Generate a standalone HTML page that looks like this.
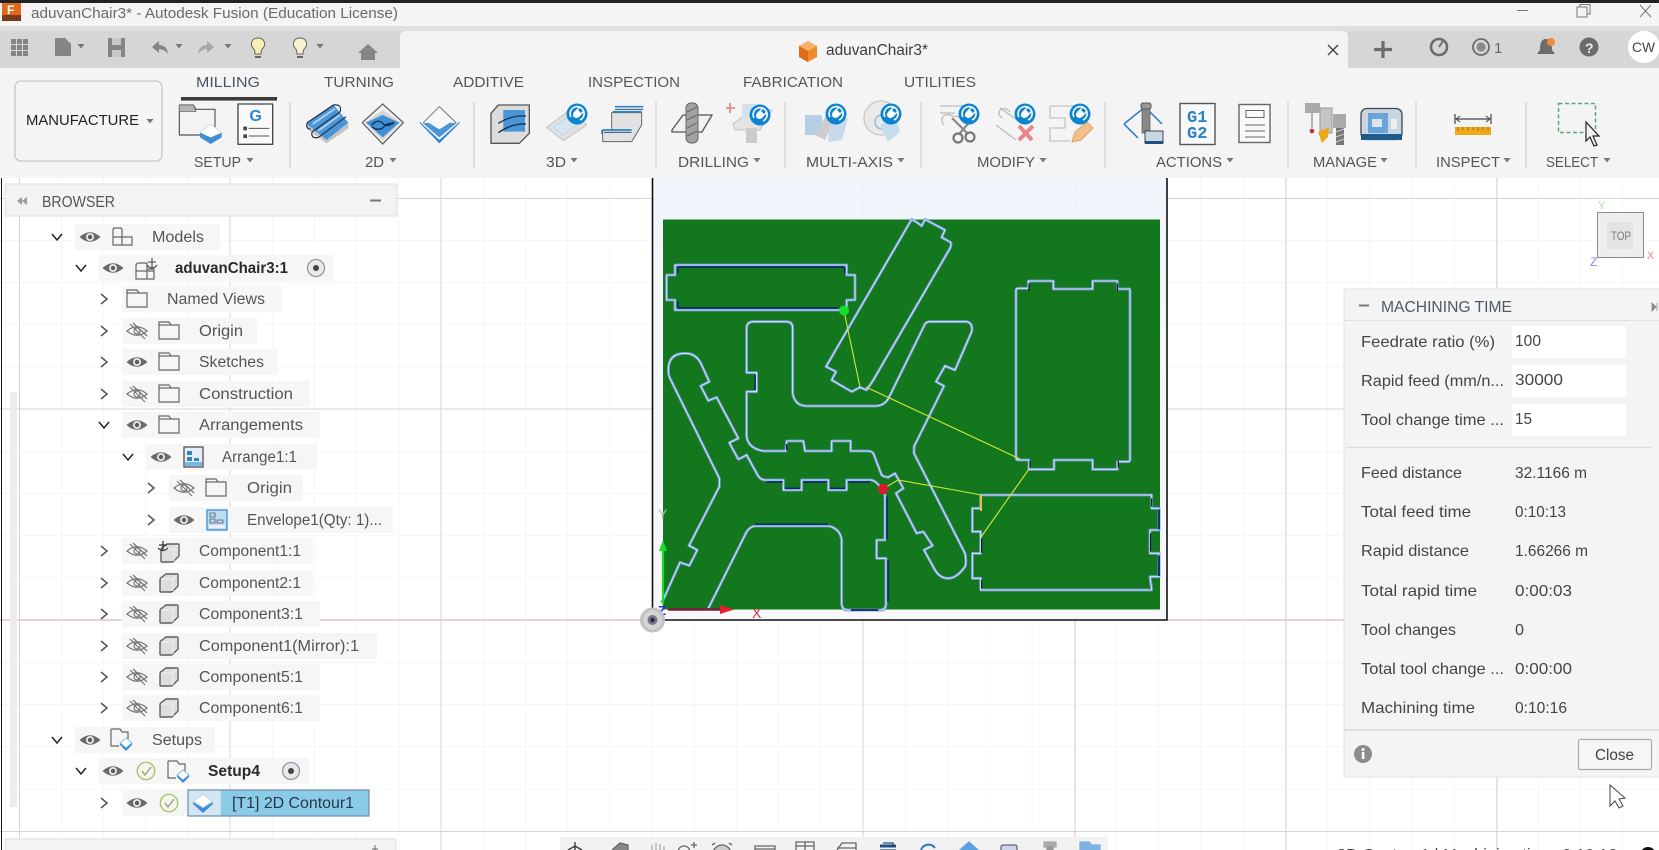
<!DOCTYPE html>
<html lang="en"><head><meta charset="utf-8"><title>aduvanChair3* - Autodesk Fusion</title>
<style>
html,body{margin:0;padding:0;background:#fff;width:1659px;height:850px;overflow:hidden}
svg{display:block;position:absolute;left:0;top:0}
text{font-family:"Liberation Sans",sans-serif}
.t{font-size:15.5px;fill:#555}
.b{font-size:15.5px;fill:#2a2a2a;font-weight:bold}
.r{font-size:15px;fill:#4a4a4a}
.p{font-size:16px;fill:#444}
.ic{fill:none;stroke:#666;stroke-width:1.2}
</style></head><body>
<svg width="1659" height="850" viewBox="0 0 1659 850" xmlns="http://www.w3.org/2000/svg">
<defs>
<pattern id="grid" patternUnits="userSpaceOnUse" x="652" y="620" width="42.2" height="42.2"><path d="M0,0V42.2M0,0H42.2" stroke="#f0eeee" stroke-width="1" fill="none"/></pattern>
<linearGradient id="stock" x1="0" y1="0" x2="0" y2="1"><stop offset="0" stop-color="#edf5fc"/><stop offset="1" stop-color="#f7f6fc"/></linearGradient>
<g id="eye"><path d="M-10.5,0Q0,-9.5 10.5,0Q0,9.5 -10.5,0Z" fill="#6a6a6a"/><circle r="4" fill="#e8e8e8"/><circle r="2.2" fill="#5c5c5c"/></g>
<g id="off" fill="none" stroke="#777" stroke-width="1.2"><path d="M-10,0Q0,-8.5 10,0Q0,8.5 -10,0Z"/><circle r="3"/><path d="M-7,-7L8,8M-4,-8L10,5"/></g>
<path id="cr" d="M-3,-5L3,0L-3,5" fill="none" stroke="#555" stroke-width="1.5"/>
<path id="cd" d="M-5,-3L0,3L5,-3" fill="none" stroke="#222" stroke-width="1.5"/>
<g id="folder" fill="none" stroke="#666" stroke-width="1.2"><path d="M-10,-9H0L2,-6H10V8H-10Z"/><path d="M-10,-6H2"/></g>
<g id="comp"><path d="M-9,-3Q-9,-5 -7,-6L-3,-9H8Q9,-9 9,-8V3L4,8Q3,9 2,9H-8Q-9,9 -9,8Z" fill="#dedede" stroke="#5f5f5f" stroke-width="1.4"/><path d="M-8,-4H4V8M4,-4L8,-8" fill="none" stroke="#f2f2f2" stroke-width="1"/></g>
<g id="setupi"><path d="M-10,-10H-1L1,-7H7V0M-10,-10V7H-2" fill="none" stroke="#666" stroke-width="1.2"/><path d="M5,-1L11,4L5,9L-1,4Z" fill="#fff" stroke="#8db8e0" stroke-width="1"/><path d="M-1,4L5,9L11,4V6L5,12L-1,6Z" fill="#3f8fd6"/></g>
<g id="check"><circle r="8.7" fill="#f5f7ee" stroke="#a9c46c" stroke-width="1.4"/><path d="M-4,0L-1,4L5,-4" fill="none" stroke="#9a9a7c" stroke-width="1.3"/></g>
<g id="radio"><circle r="8.5" fill="#e8e8ef" stroke="#999" stroke-width="1.3"/><circle r="3" fill="#444"/></g>
<g id="plug"><circle r="10.5" fill="#0d84cf"/><path d="M-6,3A7,7 0 1 1 3,6" fill="none" stroke="#fff" stroke-width="1.6"/><path d="M-3,-2L2,-7L3,-6L1,-4L4,-1L6,-3L7,-2L2,3Q-1,5 -3,3Q-5,1 -3,-2Z" fill="#fff"/></g>
<path id="tri" d="M-3.5,-2H3.5L0,2.5Z" fill="#777"/>
</defs>

<!-- viewport -->
<rect width="1659" height="850" fill="#fff"/>
<rect y="178" width="1659" height="672" fill="url(#grid)"/>
<g stroke="#d6d4d4" stroke-width="1" fill="none">
<path d="M19.5,178V850M230,178V850M441,178V850M863,178V850M1075,178V850M1286,178V850M1497,178V850"/>
<path d="M0,198.5H1659M0,409H1659M0,831.5H1659"/>
</g>
<path d="M0,620H652M1167,620H1659" stroke="#d9b8b8" stroke-width="1.3"/>
<rect x="652" y="178" width="515" height="442" fill="url(#stock)" fill-opacity=".85"/>
<path d="M652.5,178V620H1167V178" fill="none" stroke="#111" stroke-width="1.6"/>
<rect x="663" y="219.5" width="497" height="390" fill="#13781d"/>

<!-- toolpaths -->
<g transform="translate(640,180) scale(.33333)" fill="none" stroke-linejoin="round">
<g stroke="#6f9ad2" stroke-width="8.5">
<path id="pa" d="M105,255H620V285H645V360H620V390H105V360H80V285H105Z"/>
<path id="pb" d="M815,118L835,130L845,138L855,118L915,150L905,172L932,187Q935,195 930,205L700,600Q690,615 680,630L660,622L635,635L575,600L588,575L558,560Z"/>
<path id="pc" d="M340,425H440Q458,425 458,445V640Q465,678 500,678H705Q735,678 748,650L855,432Q860,425 870,425H980Q1000,430 995,455L945,570L915,558L888,605L912,618L822,800V820L975,1120Q980,1150 975,1160Q950,1195 925,1195Q900,1195 885,1170L852,1110L878,1097L850,1055L830,1060L768,940L790,925L765,880L745,892Q730,890 725,885L700,820Q695,813 680,813H632V783H575V813H495L490,783H440L437,813H370Q325,805 320,770V635H350V578H320V445Q320,425 340,425Z"/>
<path id="pd" d="M85,570Q85,520 135,520Q170,520 185,555L208,605L182,618L205,662L230,652L295,775L268,788L295,838L320,825L350,880Q360,900 375,900H430V930H485V900H565V930H620V900H695Q715,905 735,945V1080H710V1135H738V1270Q738,1290 720,1290H625Q605,1290 605,1270V1080Q600,1045 565,1038H345Q330,1040 320,1055L205,1285M65,1270L120,1147L148,1157L172,1110L147,1097L238,920V895L90,595Q85,585 85,570"/>
</g>
<g stroke="#e8f0ff" stroke-width="2.4">
<use href="#pa"/><use href="#pb"/><use href="#pc"/><use href="#pd"/>
</g>
<g stroke="#0b2a66" stroke-width="5">
<path d="M114,261H612M114,384H596M614,262V280M114,262V280M114,365V383"/>
<path d="M741,950V1078M744,1140V1265M345,1033H565M633,1290H715M440,792V810M345,630V585"/>
<path d="M380,906H428M435,925H480M490,906H560M570,925H615M625,906H690"/>
</g>
</g>
<g transform="translate(960,200) scale(.33333)" fill="none" stroke-linejoin="round">
<g stroke="#6f9ad2" stroke-width="8.5">
<path id="pe" d="M175,265H205V243H280V267H398V243H472V267H505Q510,265 510,272V778Q510,785 505,785H472V808H398V780H282V808H207V780H175Q168,780 168,772V272Q168,265 175,265Z"/>
<path id="pf" d="M62,885H575V925H597V990H570V1060H597V1130H570L575,1170H62V1135H37V1060H62V995H37V925H62Z"/>
</g>
<g stroke="#e8f0ff" stroke-width="2.4"><use href="#pe"/><use href="#pf"/></g>
<g stroke="#061c66" stroke-width="5"><path d="M597,928V988M597,1066V1128"/></g>
<g stroke="#0b1f2f" stroke-width="4"><path d="M207,250V272M472,250V272M210,782V803M475,782V803M65,1015V1058M65,1140V1165M575,895V920M572,1000V1055"/></g>
</g>
<g fill="none" stroke-width="1.1">
<path d="M844,311L860,387M866,387L1020,459M1029,469L981,537M883,489L898,480L960,491L981,495" stroke="#cfe83a"/>
<path d="M981,495V511" stroke="#e8c030" stroke-width="2"/>
</g>
<circle cx="844" cy="310.5" r="5" fill="#16dc2a"/>
<circle cx="883" cy="489" r="5.2" fill="#d91c2c"/>

<!-- triad -->
<path d="M663,604V548" stroke="#12e020" stroke-width="2.2"/><path d="M659,551H667L663,540Z" fill="#12e020"/>
<text x="658" y="519" font-size="14" fill="#9ac79a">Y</text>
<path d="M668,609.5H722" stroke="#7a2036" stroke-width="2.4"/><path d="M720,605L734,609.5L720,614Z" fill="#e0202a"/>
<text x="752" y="618" font-size="14" fill="#d2353a">X</text>
<text x="658" y="615" font-size="13" font-weight="bold" fill="#1c2cdc">Z</text>
<circle cx="652.5" cy="620" r="11" fill="#d4d4d4" stroke="#c2c2c2" stroke-width="3"/>
<circle cx="652.5" cy="620" r="5" fill="#7a7292"/><circle cx="652.5" cy="620" r="2.2" fill="#2a2a3a"/>

<!-- viewcube -->
<rect x="1597.5" y="212.5" width="46" height="45" fill="#eeeeee" stroke="#8a8a8a" stroke-width="1"/>
<rect x="1607" y="222" width="26" height="27" fill="#e3e3e3"/>
<text x="1611" y="240" font-size="12" fill="#7c7c7c" textLength="20" lengthAdjust="spacingAndGlyphs">TOP</text>
<text x="1598" y="209" font-size="11" fill="#a6dca6">Y</text>
<text x="1647" y="259" font-size="11" fill="#ea8a8a">X</text>
<text x="1590" y="266" font-size="12" fill="#8a86e6">Z</text>

<!-- top chrome -->
<rect width="1659" height="178" fill="#f4f4f4"/>
<rect width="1659" height="3" fill="#222"/>
<rect y="26" width="1659" height="5" fill="#dfdfdf"/>
<rect y="31" width="1659" height="37" fill="#d6d6d6"/>
<path d="M400,68V37Q400,31 406,31H1342Q1348,31 1348,37V68Z" fill="#f4f4f4"/>
<rect x="2" y="3" width="19" height="18" fill="#e2691c"/><rect x="2" y="15" width="19" height="6" fill="#7a3a1a"/>
<text x="7" y="14" font-size="12" font-weight="bold" fill="#fff">F</text>
<text x="31" y="18" font-size="15" fill="#6a6a6a" textLength="367" lengthAdjust="spacingAndGlyphs">aduvanChair3* - Autodesk Fusion (Education License)</text>
<!-- window controls -->
<path d="M1517,10.5H1528" stroke="#777"/><g fill="none" stroke="#777"><rect x="1577" y="7" width="10" height="10"/><path d="M1580,7V4.5H1590V14H1587"/></g><path d="M1640,5L1651,17M1651,5L1640,17" stroke="#777" fill="none"/>

<!-- quick toolbar -->
<g fill="#858585">
<path d="M11,39h5v5h-5zM17,39h5v5h-5zM23,39h5v5h-5zM11,45h5v5h-5zM17,45h5v5h-5zM23,45h5v5h-5zM11,51h5v5h-5zM17,51h5v5h-5zM23,51h5v5h-5z"/>
<path d="M55,38H65L71,44V56H55Z"/><use href="#tri" x="81" y="46"/>
<path d="M108,38H125V57H108Z"/><rect x="112" y="38" width="9" height="7" fill="#c8c8c8"/><rect x="112" y="50" width="9" height="7" fill="#c8c8c8"/>
<path d="M152,47L159,41V45Q167,45 168,54Q164,49 159,49V53Z"/><use href="#tri" x="179" y="46"/>
<path d="M214,47L207,41V45Q199,45 198,54Q202,49 207,49V53Z" fill="#a8a8a8"/><use href="#tri" x="228" y="46"/>
<use href="#tri" x="320" y="46"/>
<path d="M368,44L378,53H375V60H361V53H358Z"/>
</g>
<g stroke="#666" stroke-width="1"><path d="M258,38C251,38 250,45 253,48C255,50 255,52 255,54H261C261,52 261,50 263,48C266,45 265,38 258,38Z" fill="#f6eeb4"/><path d="M255,57H261" stroke-width="2"/>
<path d="M300,38C293,38 292,45 295,48C297,50 297,52 297,54H303C303,52 303,50 305,48C308,45 307,38 300,38Z" fill="#f7f2cf"/><path d="M297,57H303" stroke-width="2"/></g>

<!-- document tab -->
<path d="M808,41L817,46V57L808,62L799,57V46Z" fill="#ef8a2c"/><path d="M808,41L817,46L808,51L799,46Z" fill="#f7b26a"/><path d="M808,51V62L799,57V46Z" fill="#dd6d18"/>
<text x="826" y="55" font-size="15.5" fill="#3c3c3c" textLength="102" lengthAdjust="spacingAndGlyphs">aduvanChair3*</text>
<path d="M1328,45L1338,55M1338,45L1328,55" stroke="#444" stroke-width="1.4"/>
<path d="M1383,41V58M1374,49.5H1392" stroke="#6c6c6c" stroke-width="3.2"/>
<circle cx="1439" cy="47" r="8" fill="none" stroke="#6c6c6c" stroke-width="2.6"/><path d="M1439,47L1443,41" stroke="#6c6c6c" stroke-width="2"/>
<circle cx="1481" cy="47" r="8" fill="none" stroke="#6c6c6c" stroke-width="1.8"/><circle cx="1481" cy="47" r="4.6" fill="#8a8a8a"/>
<text x="1494" y="53" font-size="15" fill="#666">1</text>
<path d="M1546,39C1541,39 1540,44 1540,50L1537,54H1555L1552,50C1552,44 1551,39 1546,39Z" fill="#6c6c6c"/><circle cx="1551" cy="42" r="4" fill="#f08a3c"/>
<circle cx="1589" cy="47" r="9.5" fill="#6c6c6c"/><text x="1585" y="53" font-size="14" font-weight="bold" fill="#eee">?</text>
<circle cx="1644" cy="47" r="16" fill="#fff"/><text x="1632" y="52" font-size="14" fill="#444" textLength="23" lengthAdjust="spacingAndGlyphs">CW</text>

<!-- ribbon tabs -->
<g font-size="15" fill="#565656">
<text x="196" y="87" fill="#4a5560" textLength="64" lengthAdjust="spacingAndGlyphs">MILLING</text>
<text x="324" y="87" textLength="70" lengthAdjust="spacingAndGlyphs">TURNING</text>
<text x="453" y="87" textLength="71" lengthAdjust="spacingAndGlyphs">ADDITIVE</text>
<text x="588" y="87" textLength="92" lengthAdjust="spacingAndGlyphs">INSPECTION</text>
<text x="743" y="87" textLength="100" lengthAdjust="spacingAndGlyphs">FABRICATION</text>
<text x="904" y="87" textLength="72" lengthAdjust="spacingAndGlyphs">UTILITIES</text>
</g>
<rect x="181" y="97" width="96" height="3.6" fill="#3a3a3a"/>
<rect x="15" y="81" width="147" height="80" rx="6" fill="#f5f5f5" stroke="#c6c6c6" stroke-width="1.3"/>
<text x="26" y="125" font-size="15" fill="#222" textLength="113" lengthAdjust="spacingAndGlyphs">MANUFACTURE</text>
<use href="#tri" x="150" y="121"/>
<g stroke="#cfcfcf" stroke-width="1.2"><path d="M290,102V168M474,102V168M656,102V168M785,102V168M921,102V168M1105,102V168M1288,102V168M1416,102V168M1526,102V168"/></g>
<g font-size="15" fill="#555">
<text x="194" y="167" textLength="47" lengthAdjust="spacingAndGlyphs">SETUP</text>
<text x="365" y="167" textLength="19" lengthAdjust="spacingAndGlyphs">2D</text>
<text x="546" y="167" textLength="20" lengthAdjust="spacingAndGlyphs">3D</text>
<text x="678" y="167" textLength="71" lengthAdjust="spacingAndGlyphs">DRILLING</text>
<text x="806" y="167" textLength="87" lengthAdjust="spacingAndGlyphs">MULTI-AXIS</text>
<text x="977" y="167" textLength="58" lengthAdjust="spacingAndGlyphs">MODIFY</text>
<text x="1156" y="167" textLength="66" lengthAdjust="spacingAndGlyphs">ACTIONS</text>
<text x="1313" y="167" textLength="64" lengthAdjust="spacingAndGlyphs">MANAGE</text>
<text x="1436" y="167" textLength="64" lengthAdjust="spacingAndGlyphs">INSPECT</text>
<text x="1546" y="167" textLength="52" lengthAdjust="spacingAndGlyphs">SELECT</text>
</g>
<use href="#tri" x="250" y="160"/><use href="#tri" x="393" y="160"/><use href="#tri" x="574" y="160"/><use href="#tri" x="757" y="160"/><use href="#tri" x="901" y="160"/><use href="#tri" x="1043" y="160"/><use href="#tri" x="1230" y="160"/><use href="#tri" x="1384" y="160"/><use href="#tri" x="1507" y="160"/><use href="#tri" x="1607" y="160"/>

<!-- ribbon icons left -->
<g transform="translate(170,100) scale(.33333)" stroke-linejoin="round">
<path d="M28,15H70L78,28H135V85M28,15V105H90" fill="none" stroke="#555" stroke-width="3.5"/><path d="M28,15H70L78,35H28Z" fill="#b5b5b5" stroke="#666" stroke-width="2"/>
<path d="M122,72L155,98L122,124L90,98Z" fill="#fff" stroke="#b8d2ea" stroke-width="2"/><path d="M90,98L122,112L155,98V112L122,132L90,112Z" fill="#3f8ed8"/>
<rect x="204" y="12" width="104" height="121" fill="#f9f9f9" stroke="#444" stroke-width="4"/>
<text x="238" y="63" font-size="48" font-weight="bold" fill="#2a86cc">G</text>
<path d="M220,80h11v11h-11zM220,103h11v11h-11z" fill="#444"/><path d="M236,85H298M236,108H298" stroke="#555" stroke-width="3"/>
<path d="M470,120L535,68V85L470,130L410,85V72Z" fill="#c4c4c4"/>
<path d="M410,72L490,14L535,68L470,120Z" fill="#4a95d8"/>
<path d="M428,72L495,26M445,92L510,45" stroke="#a5cdf0" stroke-width="6" fill="none"/>
<path d="M422,88Q405,85 412,68L490,15Q518,12 510,36L426,96Q422,118 446,112L528,50" fill="none" stroke="#1f2f40" stroke-width="3.5"/>
<path d="M638,12L700,68L638,132L577,68Z" fill="#f1f1f1" stroke="#666" stroke-width="4"/><path d="M585,68L638,30L692,68L638,122Z" fill="#d5d5d5"/><path d="M588,68L638,45L688,68L638,112Z" fill="#3f8ed8"/><path d="M605,75Q625,55 638,70Q655,85 672,65M605,80Q625,95 640,82Q655,65 672,72" fill="none" stroke="#17304a" stroke-width="4"/>
<path d="M750,68L808,122L868,68L808,128Z" fill="#2f86d6" stroke="#2f86d6" stroke-width="3"/><path d="M808,20L858,68L808,110L760,68Z" fill="#f8f8f8" stroke="#777" stroke-width="3"/><path d="M775,68L808,88L840,68L858,70L808,112L760,70Z" fill="#4a95d8"/>
<path d="M985,15H1078V100L1048,130H963V40Z" fill="#dcdcdc" stroke="#555" stroke-width="4"/><path d="M1000,30H1065V95H1000Z" fill="#4a95d8"/><path d="M985,70Q1025,45 1068,48M985,98Q1025,70 1068,72" fill="none" stroke="#18304a" stroke-width="4"/>
<g opacity=".65"><path d="M1130,82L1200,30L1250,75L1180,122Z" fill="#d8d8d8" stroke="#aaa" stroke-width="3"/><path d="M1150,80L1200,48L1225,72L1178,105Z" fill="#c9def0" stroke="#8fb8d8" stroke-width="2"/></g>
<path d="M1325,38H1415V75L1385,125H1298V90H1325Z" fill="#e2e2e2" stroke="#666" stroke-width="3"/><path d="M1335,20H1420M1328,35H1415M1298,90H1385M1296,102V90" stroke="#2a86cc" stroke-width="5" fill="none"/><path d="M1335,28H1420M1302,97H1385" stroke="#1a3a5a" stroke-width="2.5"/>
</g>
<use href="#plug" x="577" y="114"/>
<!-- drilling -->
<path d="M672,130L683,115H712L702,132H672Z" fill="#f1f1f1" stroke="#555" stroke-width="1.3"/>
<rect x="686" y="103" width="12" height="40" rx="5" fill="#a2a2a2" stroke="#666"/>
<path d="M687,112L697,107M687,120L697,115M687,128L697,123M687,136L697,131" stroke="#666"/>
<g opacity=".55"><path d="M733,124L752,110H772L760,130H735Z" fill="#d8d8d8" stroke="#999"/><rect x="746" y="128" width="11" height="15" fill="#aaa"/><rect x="742" y="104" width="18" height="14" fill="#bcd3e8"/></g>
<path d="M730,103V113M726,108H735" stroke="#e88a90" stroke-width="1.8"/>
<use href="#plug" x="760" y="115"/>
<!-- multi axis -->
<g opacity=".7"><path d="M805,115H822V135H805Z" fill="#9cc0e2"/><path d="M815,135L830,108L838,115L825,140Z" fill="#bdbdbd"/><path d="M830,125L848,118L842,140L828,142Z" fill="#b5cfe6"/></g>
<use href="#plug" x="836" y="114"/>
<g opacity=".7" fill="none"><circle cx="881" cy="118" r="17" stroke="#bbb" stroke-width="1.5" fill="#e7e7e7"/><circle cx="882" cy="122" r="7" stroke="#8ab1d4" stroke-width="2"/><path d="M880,125L896,118L900,132L888,142Z" fill="#b5d2ea"/></g>
<use href="#plug" x="891" y="114"/>
<!-- modify -->
<g fill="none">
<path d="M940,106H965M940,113H955" stroke="#bbb" stroke-width="1.2"/><path d="M944,125C938,117 946,112 952,116L968,118" stroke="#bbb" stroke-width="1.3"/>
<path d="M952,118L967,133M973,118L960,133" stroke="#8a8a8a" stroke-width="2.2"/><circle cx="958" cy="138" r="4.5" stroke="#777" stroke-width="2.2"/><circle cx="970" cy="137" r="4.5" stroke="#777" stroke-width="2.2"/>
<path d="M1000,108L1020,122M996,125L1016,140M1002,118C994,112 1004,104 1010,112" stroke="#bbb" stroke-width="1.3"/>
<path d="M1019,126L1032,140M1033,126L1019,140" stroke="#e8858c" stroke-width="4"/>
<path d="M1050,106H1080M1050,106V118H1065V128H1050V141H1070M1080,106V114" stroke="#c4c4c4" stroke-width="1.3"/>
</g>
<path d="M1072,142L1075,132L1087,122L1093,128L1081,140Z" fill="#f2c08a" stroke="#e0a060"/>
<use href="#plug" x="969" y="114"/><use href="#plug" x="1025" y="114"/><use href="#plug" x="1080" y="114"/>
<!-- actions -->
<path d="M1124,124L1145,107L1162,124M1124,124L1138,138" fill="none" stroke="#2a78c0" stroke-width="1.5"/>
<rect x="1141" y="103" width="10" height="6" rx="2" fill="#999" stroke="#555"/><rect x="1142" y="109" width="8" height="24" fill="#888" stroke="#555" stroke-width=".7"/>
<rect x="1145" y="131" width="18" height="12" fill="#c9d8e6" stroke="#445"/><rect x="1145" y="141" width="18" height="3" fill="#1f4f80"/>
<rect x="1180" y="103.5" width="35" height="41" fill="#f9f9f9" stroke="#555" stroke-width="1.4"/>
<text x="1187" y="122" font-size="17" font-weight="bold" fill="#2a80c4" style="font-family:'Liberation Mono',monospace">G1</text>
<text x="1187" y="138" font-size="17" font-weight="bold" fill="#2a80c4" style="font-family:'Liberation Mono',monospace">G2</text>
<rect x="1239" y="104.5" width="31" height="38" fill="#f9f9f9" stroke="#666" stroke-width="1.4"/><rect x="1246" y="110.5" width="18" height="7" fill="none" stroke="#666"/><path d="M1245,125H1265M1245,131H1265M1245,137H1265" stroke="#666" stroke-width="1.1"/>
<!-- manage -->
<rect x="1305" y="103" width="15" height="10" fill="#aaa"/><path d="M1312,113V128" stroke="#888" stroke-width="1.2"/><circle cx="1312" cy="131" r="2.3" fill="#d4282a"/>
<rect x="1320" y="108" width="12" height="25" fill="#c5c5c5" stroke="#999"/><path d="M1318,132L1329,127L1328,137L1322,143Z" fill="#eda91e"/>
<rect x="1333" y="114" width="13" height="14" fill="#aaa"/><rect x="1336" y="128" width="8" height="17" fill="#777"/><path d="M1336,132L1344,129M1336,137L1344,134M1336,142L1344,139" stroke="#ccc"/>
<rect x="1361" y="108.5" width="41" height="31" rx="6" fill="#c8d6e4" stroke="#444" stroke-width="1.3"/><rect x="1368" y="113" width="20" height="20" fill="#6aa5da"/><rect x="1372" y="119" width="10" height="8" fill="#d8e6f2"/><rect x="1391" y="119" width="6" height="10" fill="#eee"/><rect x="1361" y="134" width="41" height="6" fill="#1f5a8a"/>
<!-- inspect -->
<path d="M1455,114V124M1491,114V124M1457,119H1489" stroke="#444" stroke-width="1.2"/><path d="M1460,116L1456,119L1460,122M1486,116L1490,119L1486,122" fill="none" stroke="#444"/>
<rect x="1455" y="127" width="36" height="8" fill="#f0a818"/><path d="M1458,127v4M1463,127v3M1468,127v4M1473,127v3M1478,127v4M1483,127v3M1488,127v4" stroke="#8a6a10" stroke-width=".8"/>
<!-- select -->
<rect x="1558.5" y="103.5" width="37" height="29" fill="none" stroke="#5aa87a" stroke-width="1.5" stroke-dasharray="4 2.5"/>
<path d="M1586,122V141L1590,137L1594,146L1597,145L1593,136L1599,136Z" fill="#f4f4f4" stroke="#222" stroke-width="1.2"/>

<!-- browser panel -->
<rect x="1" y="178" width="1" height="672" fill="#111"/>
<rect x="10" y="392" width="7" height="415" fill="#ececec"/>
<rect x="5" y="184" width="392" height="32" fill="#f3f3f3" stroke="#dcdcdc"/>
<path d="M22,197L17,201L22,205ZM27,197L22,201L27,205Z" fill="#999"/>
<text x="42" y="207" font-size="15.5" fill="#555" textLength="73" lengthAdjust="spacingAndGlyphs">BROWSER</text>
<path d="M370,200.5H381" stroke="#777" stroke-width="2"/>

<g fill="#f6f6f6">
<rect x="75" y="224" width="145" height="26"/><rect x="98" y="255" width="236" height="26"/><rect x="122" y="286" width="160" height="26"/><rect x="122" y="318" width="135" height="26"/><rect x="122" y="349" width="156" height="26"/><rect x="122" y="381" width="188" height="26"/><rect x="122" y="412" width="198" height="26"/><rect x="146" y="444" width="171" height="26"/><rect x="169" y="475" width="134" height="26"/><rect x="169" y="507" width="224" height="26"/><rect x="122" y="538" width="191" height="26"/><rect x="122" y="570" width="191" height="26"/><rect x="122" y="601" width="198" height="26"/><rect x="122" y="633" width="255" height="26"/><rect x="122" y="664" width="198" height="26"/><rect x="122" y="695" width="198" height="26"/><rect x="75" y="727" width="140" height="26"/><rect x="98" y="758" width="211" height="26"/><rect x="122" y="790" width="66" height="26"/>
</g>

<!-- tree chevrons -->
<use href="#cd" x="57" y="237"/><use href="#cd" x="81" y="268"/><use href="#cr" x="104" y="299"/><use href="#cr" x="104" y="331"/><use href="#cr" x="104" y="362"/><use href="#cr" x="104" y="394"/><use href="#cd" x="104" y="425"/><use href="#cd" x="128" y="457"/><use href="#cr" x="151" y="488"/><use href="#cr" x="151" y="520"/><use href="#cr" x="104" y="551"/><use href="#cr" x="104" y="583"/><use href="#cr" x="104" y="614"/><use href="#cr" x="104" y="646"/><use href="#cr" x="104" y="677"/><use href="#cr" x="104" y="708"/><use href="#cd" x="57" y="740"/><use href="#cd" x="81" y="771"/><use href="#cr" x="104" y="803"/>
<!-- tree eyes -->
<use href="#eye" x="90" y="237"/><use href="#eye" x="113" y="268"/><use href="#off" x="137" y="331"/><use href="#eye" x="137" y="362"/><use href="#off" x="137" y="394"/><use href="#eye" x="137" y="425"/><use href="#eye" x="161" y="457"/><use href="#off" x="184" y="488"/><use href="#eye" x="184" y="520"/><use href="#off" x="137" y="551"/><use href="#off" x="137" y="583"/><use href="#off" x="137" y="614"/><use href="#off" x="137" y="646"/><use href="#off" x="137" y="677"/><use href="#off" x="137" y="708"/><use href="#eye" x="90" y="740"/><use href="#eye" x="113" y="771"/><use href="#eye" x="137" y="803"/>
<!-- tree icons -->
<g class="ic"><path d="M113,245V230Q113,228 115,228H120Q122,228 122,230V245ZM122,237H132V245H113M113,237H122"/></g>
<g class="ic"><path d="M136,266Q136,263 139,263H147V279H136ZM147,269H154V279H147M136,271H154"/></g>
<path d="M152,258V269M148,262H156M147,265Q152,271 157,265" fill="none" stroke="#444" stroke-width="1.1"/>
<use href="#folder" x="137" y="299"/><use href="#folder" x="169" y="331"/><use href="#folder" x="169" y="362"/><use href="#folder" x="169" y="394"/><use href="#folder" x="169" y="425"/><use href="#folder" x="216" y="488"/>
<rect x="184" y="447" width="19" height="20" fill="#e6eef6" stroke="#444" stroke-width="1.2"/><path d="M187,451h5v4h-5zM187,457h5v4h-5zM194,458h5v3h-5z" fill="#2a86c6"/><rect x="185" y="462" width="17" height="4" fill="#7ab6e2"/>
<rect x="207" y="510" width="20" height="20" fill="#bcdcf6" stroke="#2a8ad0" stroke-width="1.2"/><path d="M210,513h5v4h-5zM210,519h5v4h-5zM217,520h6v3h-6z" fill="none" stroke="#555" stroke-width=".8"/><rect x="209" y="525" width="16" height="3" fill="#eef"/>
<use href="#comp" x="170" y="553"/><path d="M163,541V551M159,545H167M158,548Q163,553 168,548" fill="none" stroke="#333" stroke-width="1.2"/>
<use href="#comp" x="169" y="583"/><use href="#comp" x="169" y="614"/><use href="#comp" x="169" y="646"/><use href="#comp" x="169" y="677"/><use href="#comp" x="169" y="708"/>
<use href="#setupi" x="121" y="739"/><use href="#setupi" x="178" y="771"/>
<use href="#radio" x="316" y="268"/><use href="#radio" x="291" y="771"/>
<use href="#check" x="146" y="771"/><use href="#check" x="169" y="803"/>

<!-- selection -->
<rect x="188" y="790" width="181" height="26" fill="#8ccbe8" stroke="#6e8ea8" stroke-width="1.2"/>
<rect x="188.7" y="790.7" width="32" height="24.6" fill="#d3e6f3"/>
<path d="M203,794L212,801L203,808L194,801Z" fill="#fff" stroke="#bcd6ec" stroke-width="1"/><path d="M193,802L203,808L213,802V804L203,813L193,804Z" fill="#3f8ed8"/>

<!-- tree text -->
<text class="t" x="152" y="242" textLength="52" lengthAdjust="spacingAndGlyphs">Models</text>
<text class="b" x="175" y="273" textLength="113" lengthAdjust="spacingAndGlyphs">aduvanChair3:1</text>
<text class="t" x="167" y="304" textLength="98" lengthAdjust="spacingAndGlyphs">Named Views</text>
<text class="t" x="199" y="336" textLength="44" lengthAdjust="spacingAndGlyphs">Origin</text>
<text class="t" x="199" y="367" textLength="65" lengthAdjust="spacingAndGlyphs">Sketches</text>
<text class="t" x="199" y="399" textLength="94" lengthAdjust="spacingAndGlyphs">Construction</text>
<text class="t" x="199" y="430" textLength="104" lengthAdjust="spacingAndGlyphs">Arrangements</text>
<text class="t" x="222" y="462" textLength="75" lengthAdjust="spacingAndGlyphs">Arrange1:1</text>
<text class="t" x="247" y="493" textLength="45" lengthAdjust="spacingAndGlyphs">Origin</text>
<text class="t" x="247" y="525" textLength="135" lengthAdjust="spacingAndGlyphs">Envelope1(Qty: 1)...</text>
<text class="t" x="199" y="556" textLength="102" lengthAdjust="spacingAndGlyphs">Component1:1</text>
<text class="t" x="199" y="588" textLength="102" lengthAdjust="spacingAndGlyphs">Component2:1</text>
<text class="t" x="199" y="619" textLength="104" lengthAdjust="spacingAndGlyphs">Component3:1</text>
<text class="t" x="199" y="651" textLength="160" lengthAdjust="spacingAndGlyphs">Component1(Mirror):1</text>
<text class="t" x="199" y="682" textLength="104" lengthAdjust="spacingAndGlyphs">Component5:1</text>
<text class="t" x="199" y="713" textLength="104" lengthAdjust="spacingAndGlyphs">Component6:1</text>
<text class="t" x="152" y="745" textLength="50" lengthAdjust="spacingAndGlyphs">Setups</text>
<text class="b" x="208" y="776" textLength="52" lengthAdjust="spacingAndGlyphs">Setup4</text>
<text class="t" x="232" y="808" style="fill:#23384a" textLength="122" lengthAdjust="spacingAndGlyphs">[T1] 2D Contour1</text>

<!-- machining time panel -->
<rect x="1344" y="289" width="315" height="488" fill="#f4f4f5"/>
<path d="M1344,289H1659M1344,289V777H1659" fill="none" stroke="#e2e2e2"/>
<path d="M1344,320.5H1659" stroke="#e0e0e0"/>
<path d="M1359,305.5H1369" stroke="#777" stroke-width="2"/>
<text x="1381" y="312" font-size="15.5" fill="#4f5a62" textLength="131" lengthAdjust="spacingAndGlyphs">MACHINING TIME</text>
<path d="M1652,303L1656,307L1652,311ZM1657,303V311" fill="#888" stroke="#888" stroke-width=".8"/>
<g fill="#fff"><rect x="1512" y="326" width="114" height="32"/><rect x="1512" y="365" width="114" height="32"/><rect x="1512" y="404" width="114" height="32"/></g>
<g>
<text class="p" x="1361" y="347" textLength="134" lengthAdjust="spacingAndGlyphs">Feedrate ratio (%)</text>
<text class="p" x="1361" y="386" textLength="143" lengthAdjust="spacingAndGlyphs">Rapid feed (mm/n...</text>
<text class="p" x="1361" y="425" textLength="143" lengthAdjust="spacingAndGlyphs">Tool change time ...</text>
<text class="p" x="1515" y="346" textLength="26" lengthAdjust="spacingAndGlyphs">100</text>
<text class="p" x="1515" y="385" textLength="48" lengthAdjust="spacingAndGlyphs">30000</text>
<text class="p" x="1515" y="424" textLength="17" lengthAdjust="spacingAndGlyphs">15</text>
<text class="p" x="1361" y="478" textLength="101" lengthAdjust="spacingAndGlyphs">Feed distance</text>
<text class="p" x="1361" y="517" textLength="110" lengthAdjust="spacingAndGlyphs">Total feed time</text>
<text class="p" x="1361" y="556" textLength="108" lengthAdjust="spacingAndGlyphs">Rapid distance</text>
<text class="p" x="1361" y="596" textLength="116" lengthAdjust="spacingAndGlyphs">Total rapid time</text>
<text class="p" x="1361" y="635" textLength="95" lengthAdjust="spacingAndGlyphs">Tool changes</text>
<text class="p" x="1361" y="674" textLength="143" lengthAdjust="spacingAndGlyphs">Total tool change ...</text>
<text class="p" x="1361" y="713" textLength="114" lengthAdjust="spacingAndGlyphs">Machining time</text>
<text class="p" x="1515" y="478" textLength="72" lengthAdjust="spacingAndGlyphs">32.1166 m</text>
<text class="p" x="1515" y="517" textLength="51" lengthAdjust="spacingAndGlyphs">0:10:13</text>
<text class="p" x="1515" y="556" textLength="73" lengthAdjust="spacingAndGlyphs">1.66266 m</text>
<text class="p" x="1515" y="596" textLength="57" lengthAdjust="spacingAndGlyphs">0:00:03</text>
<text class="p" x="1515" y="635" textLength="9" lengthAdjust="spacingAndGlyphs">0</text>
<text class="p" x="1515" y="674" textLength="57" lengthAdjust="spacingAndGlyphs">0:00:00</text>
<text class="p" x="1515" y="713" textLength="52" lengthAdjust="spacingAndGlyphs">0:10:16</text>
</g>
<path d="M1346,447.5H1652" stroke="#dcdcdc" stroke-width="1.2"/>
<path d="M1344,730H1659" stroke="#dedede" stroke-width="2"/>
<circle cx="1363" cy="754" r="9" fill="#8c8c8c"/><rect x="1361.8" y="752" width="2.6" height="7" fill="#fff"/><circle cx="1363" cy="749.5" r="1.5" fill="#fff"/>
<rect x="1578.5" y="739.5" width="73" height="30" rx="2" fill="#f6f6f6" stroke="#aaa" stroke-width="1.2"/>
<text x="1595" y="760" font-size="15.5" fill="#444" textLength="39" lengthAdjust="spacingAndGlyphs">Close</text>
<path d="M1610,785V806L1615,801L1619,808L1623,806L1619,799L1625,798Z" fill="#fff" stroke="#444" stroke-width="1"/>

<!-- bottom left panel -->
<rect x="5" y="839" width="391" height="14" fill="#f3f3f3" stroke="#dcdcdc"/>
<text x="43" y="860" font-size="15" fill="#555" textLength="80" lengthAdjust="spacingAndGlyphs">COMMENTS</text>
<path d="M375,845V852M372,849H378" stroke="#666"/>

<!-- bottom nav bar -->
<rect x="560" y="837" width="548" height="13" fill="#f2f2f2"/>
<g fill="none" stroke="#666" stroke-width="1.3">
<path d="M575,842V850M568,850L575,846L582,850" stroke="#333"/>
<path d="M612,850L620,843L628,845V850" fill="#888"/>
<path d="M652,850V845M656,850V843M660,850V844M664,850V846" stroke="#aaa"/>
<circle cx="684" cy="852" r="6"/><path d="M694,842V848M691,845H697"/>
<circle cx="722" cy="854" r="9" fill="#ccc"/><path d="M712,845l3,-2M732,845l-3,-2" stroke="#555"/>
<path d="M755,850V846H775V850"/><path d="M755,849H775"/>
<path d="M796,850V842H814V850M805,842V850M796,846H814"/>
<path d="M837,850L842,843H856V850M837,848H856"/>
<path d="M880,846H896" stroke="#1f4f80" stroke-width="3"/><path d="M883,843H893V846M880,850H896" stroke="#1f4f80"/>
<path d="M921,850A8,8 0 0 1 935,848" stroke="#2a78c0" stroke-width="2"/>
<path d="M960,850L969,842L978,850Z" fill="#5da0de" stroke="#5da0de"/>
<rect x="1001" y="845" width="16" height="8" rx="2" fill="#ccd6e8"/>
<rect x="1044" y="842" width="12" height="5" fill="#aaa" stroke="#aaa"/><rect x="1047" y="847" width="6" height="3" fill="#999" stroke="#999"/>
<path d="M1080,842H1089L1092,845H1100V850H1080Z" fill="#7fb3e3" stroke="#7fb3e3"/>
</g>

<!-- bottom status -->
<text x="1337" y="859" font-size="15" fill="#444" textLength="280" lengthAdjust="spacingAndGlyphs">2D Contour1 | Machining time: 0:10:16</text>
<circle cx="1648" cy="855" r="8" fill="#111"/>
</svg>
</body></html>
